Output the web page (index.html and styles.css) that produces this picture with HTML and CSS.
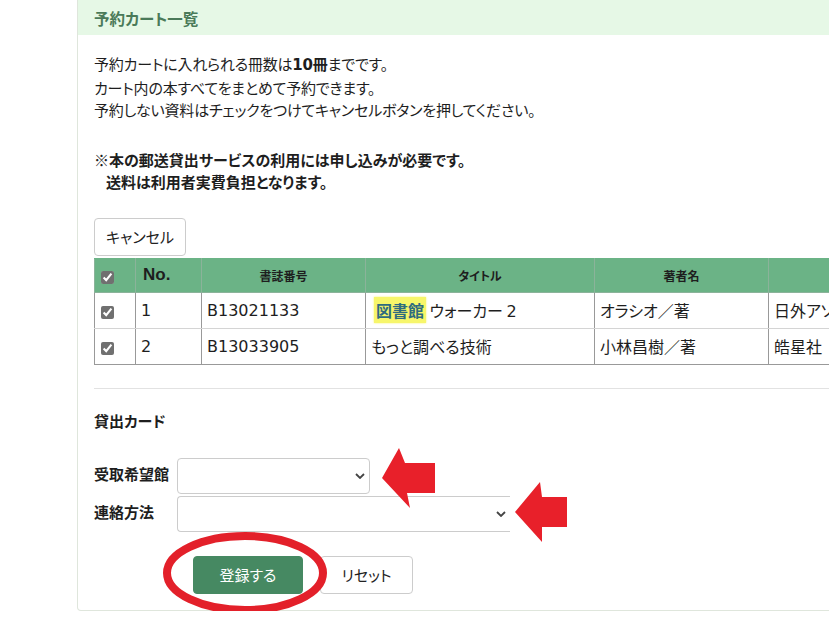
FILE: index.html
```html
<!DOCTYPE html>
<html lang="ja">
    <head>
        <meta charset="UTF-8">
        <meta name="viewport" content="width=device-width, initial-scale=1.0">
        <title>予約カート一覧</title>
        <link rel="stylesheet" href="styles.css">
    </head>
    <body>
        <div class="page">
            <div class="card">
                <div class="card_header">予約カート一覧</div>
                <div class="card_body">
                    <div class="intro">
                        <p>予約カートに入れられる冊数は<b class="num">10</b><b>冊</b>までです。</p>
                        <p>カート内の本すべてをまとめて予約できます。</p>
                        <p>予約しない資料はチェックをつけてキャンセルボタンを押してください。</p>
                    </div>

                    <div class="notice">
                        <p>※本の郵送貸出サービスの利用には申し込みが必要です。</p>
                        <p class="indent">送料は利用者実費負担となります。</p>
                    </div>

                    <button class="btn btn_plain cancel">キャンセル</button>

                    <table class="cart">
                        <colgroup>
                            <col class="c_check">
                            <col class="c_no">
                            <col class="c_id">
                            <col class="c_title">
                            <col class="c_author">
                            <col class="c_pub">
                        </colgroup>
                        <thead>
                            <tr>
                                <th><input type="checkbox" checked></th>
                                <th class="no">No.</th>
                                <th>書誌番号</th>
                                <th>タイトル</th>
                                <th>著者名</th>
                                <th></th>
                            </tr>
                        </thead>
                        <tbody>
                            <tr>
                                <td><input type="checkbox" checked></td>
                                <td class="num">1</td>
                                <td class="num">B13021133</td>
                                <td><span class="hit">図書館</span> ウォーカー <span class="num">2</span></td>
                                <td>オラシオ／著</td>
                                <td>日外アソ</td>
                            </tr>
                            <tr>
                                <td><input type="checkbox" checked></td>
                                <td class="num">2</td>
                                <td class="num">B13033905</td>
                                <td>もっと調べる技術</td>
                                <td>小林昌樹／著</td>
                                <td>皓星社</td>
                            </tr>
                        </tbody>
                    </table>

                    <hr class="divider">

                    <h4 class="section_title">貸出カード</h4>

                    <div class="form">
                        <label class="form_label">受取希望館</label>
                        <div class="select select_short">
                            <svg width="10" height="6" viewBox="0 0 10 6"><path d="M1 1l4 4 4-4" fill="none" stroke="#444" stroke-width="1.8"/></svg>
                        </div>
                        <label class="form_label">連絡方法</label>
                        <div class="select select_long">
                            <svg width="10" height="6" viewBox="0 0 10 6"><path d="M1 1l4 4 4-4" fill="none" stroke="#444" stroke-width="1.8"/></svg>
                        </div>
                    </div>

                    <div class="actions">
                        <button class="btn btn_primary">登録する</button>
                        <button class="btn btn_plain">リセット</button>
                    </div>
                </div>
            </div>
        </div>

        <!-- red annotation marks drawn over the form -->
        <svg class="marks" width="829" height="622" viewBox="0 0 829 622">
            <polygon points="382,478 399,448 405,463 435,463 435,493 407,493 410,508" fill="#e8202a"/>
            <polygon points="515,512 540,482 542,497 567,497 567,527 542,527 542,542" fill="#e8202a"/>
            <ellipse cx="245" cy="573" rx="78" ry="37" fill="none" stroke="#e3202a" stroke-width="8"/>
        </svg>
    </body>
</html>
```

FILE: styles.css
```css
html {
    overflow: hidden;
}

body {
    margin: 0;
    position: relative;
    font-family: "Noto Sans CJK JP", "Liberation Sans", sans-serif;
    font-feature-settings: "palt";
    font-size: 15px;
    color: #1e1e1e;
    background: #fff;
}

.num {
    font-family: "DejaVu Sans", "Noto Sans CJK JP", sans-serif;
}

.page {
    padding-left: 77px;
}

.card {
    width: 900px;
    border: 1px solid #dfe6dc;
    border-top: none;
    border-radius: 0 0 4px 4px;
}

.card_header {
    height: 35px;
    display: flex;
    align-items: center;
    padding: 0 16px;
    background: #e6f8e6;
    color: #4a7a59;
    font-size: 15.5px;
    font-weight: bold;
}

.card_body {
    padding: 18px 16px 16px;
}

.intro p,
.notice p {
    margin: 0;
    line-height: 22.5px;
}

.intro {
    letter-spacing: -0.2px;
}

.notice {
    margin-top: 27px;
    font-weight: bold;
}

.notice p {
    line-height: 22px;
}

.notice .indent {
    padding-left: 12px;
}

.btn {
    height: 38px;
    border-radius: 4px;
    font-family: inherit;
    font-feature-settings: "palt";
    font-size: 15px;
    padding: 0 8px;
    white-space: nowrap;
    cursor: pointer;
}

.btn_plain {
    background: #fff;
    border: 1px solid #ccc;
    color: #222;
}

.btn_primary {
    width: 110px;
    background: #468962;
    border: 1px solid #468962;
    color: #fff;
}

.cancel {
    display: block;
    width: 92px;
    margin-top: 25px;
}

/* cart table */
.cart {
    margin-top: 2px;
    border-collapse: collapse;
    table-layout: fixed;
    width: 854px;
    border: 1px solid #999;
}

.c_check { width: 41px; }
.c_no { width: 66px; }
.c_id { width: 164px; }
.c_title { width: 229px; }
.c_author { width: 174px; }
.c_pub { width: 180px; }

.cart th {
    height: 33px;
    background: #6bb386;
    font-size: 12px;
    font-weight: bold;
    text-align: center;
    border: 1px solid #8bb39a;
    border-top-color: #6bb386;
    padding: 0;
}

.cart th.no {
    text-align: left;
    padding-left: 7px;
    font-family: "Liberation Sans", sans-serif;
    font-size: 17px;
}

.cart td {
    height: 35px;
    font-size: 16px;
    padding: 0 5px;
    border-left: 1px solid #999;
    border-right: 1px solid #999;
    border-bottom: 1px solid #d4d4d4;
    white-space: nowrap;
    overflow: hidden;
}

.cart tbody tr:last-child td {
    border-bottom-color: #999;
}

.cart th:first-child,
.cart td:first-child {
    text-align: left;
    padding-left: 6px;
}

.cart input[type="checkbox"] {
    margin: 0;
    width: 13px;
    height: 13px;
    accent-color: #707070;
    vertical-align: middle;
}

.hit {
    margin-left: 3px;
    background: #f7f66a;
    color: #2f6c7f;
    font-weight: bold;
    padding: 1px 2px;
    box-shadow: 0 0 2px #f7f66a;
}

.divider {
    margin: 23px 0 0;
    border: none;
    border-top: 1px solid #e2e2e2;
}

.section_title {
    margin: 21px 0 0;
    font-size: 15px;
    line-height: 22px;
    font-weight: bold;
}

/* form */
.form {
    display: grid;
    grid-template-columns: 83px auto;
    row-gap: 2px;
    align-items: center;
    justify-items: start;
    margin-top: 26px;
}

.form_label {
    font-weight: bold;
    margin-top: -5px;
}

.select {
    box-sizing: border-box;
    height: 36px;
    border: 1px solid #ccc;
    border-radius: 4px;
    display: flex;
    align-items: center;
    justify-content: flex-end;
    padding-right: 4px;
    background: #fff;
}

.select_short { width: 193px; }
.select_long {
    width: 333px;
    border-right: none;
    border-radius: 4px 0 0 4px;
}

.actions {
    display: flex;
    gap: 17px;
    margin-top: 24px;
    padding-left: 99px;
}

.actions .btn_plain {
    width: 93px;
}

.marks {
    position: absolute;
    left: 0;
    top: 0;
    pointer-events: none;
}
```
